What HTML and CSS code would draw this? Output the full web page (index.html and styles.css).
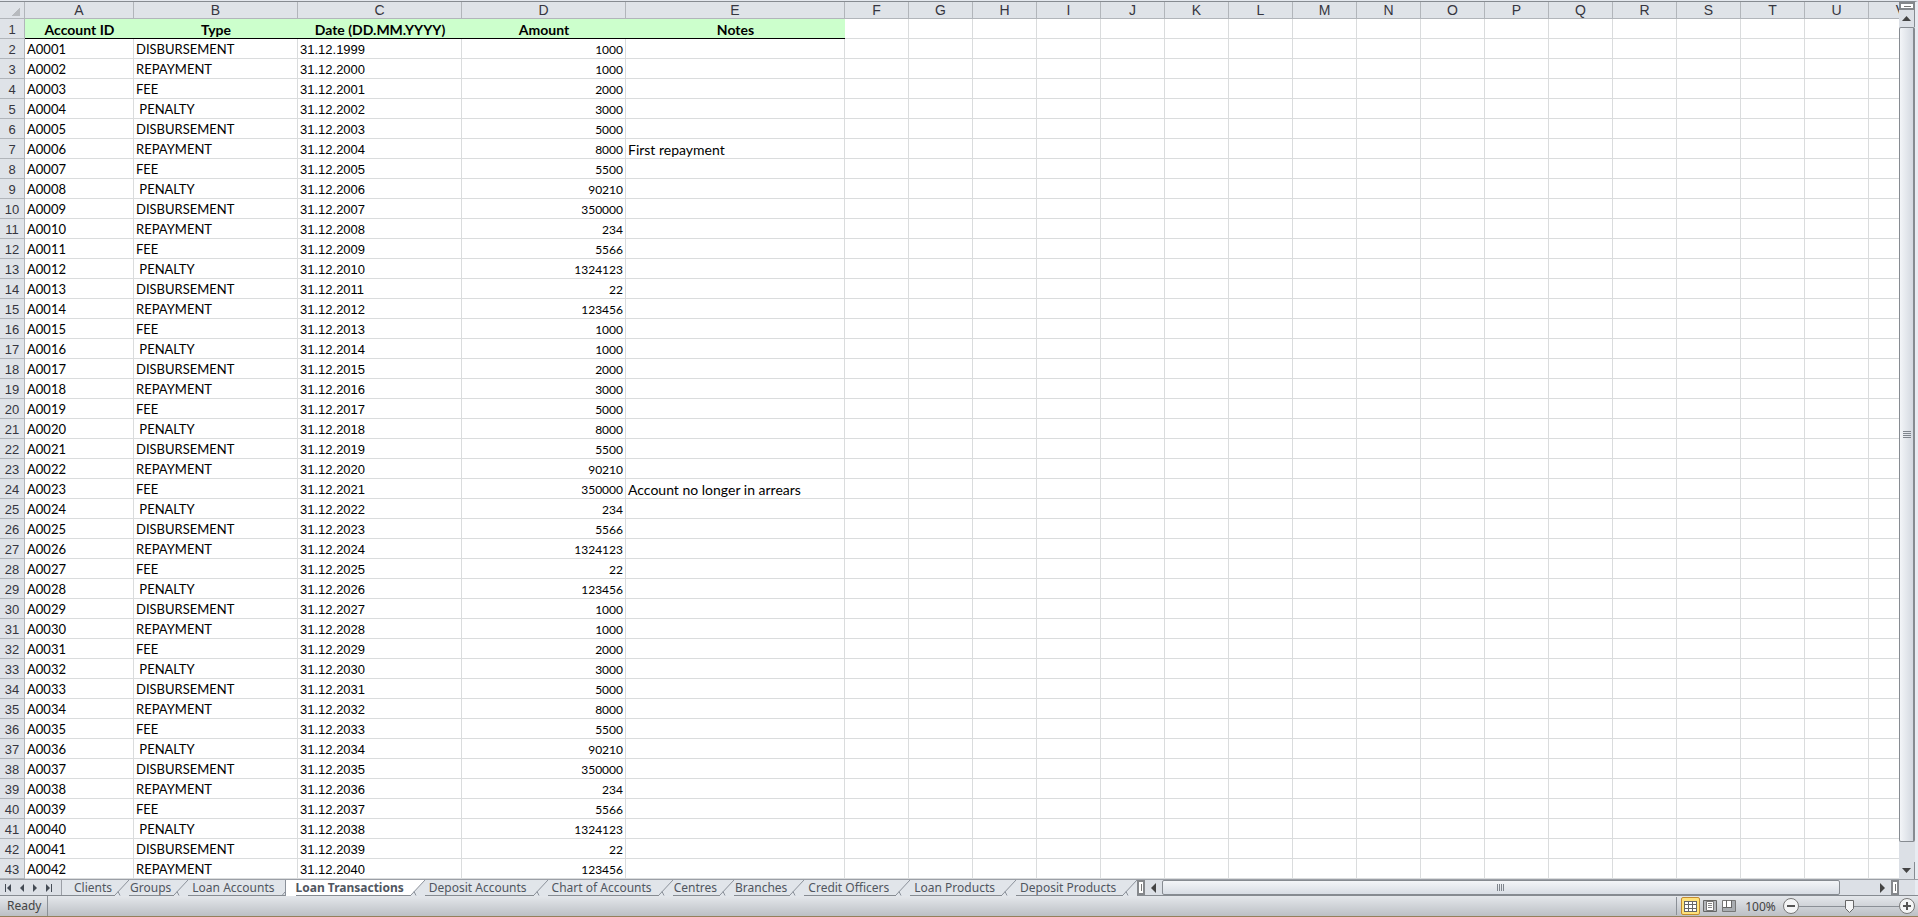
FILE: index.html
```
<!DOCTYPE html>
<html lang="en">
<head>
    <meta charset="UTF-8">
    <title>Loan Transactions</title>
    <link rel="stylesheet" href="styles.css">
</head>
<body>

    <div id="workbook">
        <div id="sheet">
            <div id="cells">
                <table id="grid">
                    <colgroup id="cols"></colgroup>
                    <thead id="letters"></thead>
                    <tbody id="rows"></tbody>
                </table>
            </div>
            <div id="vscroll">
                <button class="split-v" aria-label="Split horizontally"></button>
                <button class="arrow" aria-label="Scroll up"><svg width="9" height="5"><path d="M0 5L4.500 0L9 5z" fill="#444"/></svg></button>
                <div class="thumb-v"><span class="grip"></span></div>
                <button class="arrow" aria-label="Scroll down"><svg width="9" height="5"><path d="M0 0L4.500 5L9 0z" fill="#444"/></svg></button>
            </div>
        </div>

        <div id="tabbar">
            <div id="tabnav">
                <button aria-label="First sheet"><svg width="8" height="8"><path d="M1 0h1v8H1zM7 0v8L3 4z" fill="#444b55"/></svg></button>
                <button aria-label="Previous sheet"><svg width="8" height="8"><path d="M6 0v8L2 4z" fill="#444b55"/></svg></button>
                <button aria-label="Next sheet"><svg width="8" height="8"><path d="M1 0v8L5 4z" fill="#444b55"/></svg></button>
                <button aria-label="Last sheet"><svg width="8" height="8"><path d="M5 0h1v8H5zM0 0v8L4 4z" fill="#444b55"/></svg></button>
            </div>
            <div id="tabs"></div>
            <button class="split-h" aria-label="Resize tab bar"></button>
            <div id="hscroll">
                <button class="arrow-h" aria-label="Scroll left"><svg width="5" height="10"><path d="M5 0v10L0 5z" fill="#444"/></svg></button>
                <div class="track-h"><div class="thumb-h"><span class="grip"></span></div></div>
                <button class="arrow-h" aria-label="Scroll right"><svg width="5" height="10"><path d="M0 0v10L5 5z" fill="#444"/></svg></button>
            </div>
            <button class="split-h" aria-label="Split vertically"></button>
            <div class="corner"></div>
        </div>

        <div id="status">
            <span class="ready">Ready</span>
            <div class="views">
                <button class="view on" aria-label="Normal"><svg width="13" height="11"><path d="M0 0h13v11H0z" fill="#666"/><path d="M1 1h3v2H1zM5 1h3v2H5zM9 1h3v2H9zM1 4h3v3H1zM5 4h3v3H5zM9 4h3v3H9zM1 8h3v2H1zM5 8h3v2H5zM9 8h3v2H9z" fill="#fff"/></svg></button>
                <button class="view" aria-label="Page layout"><svg width="14" height="12"><path d="M0.500 0.500h13v11H0.500z" fill="#b4b7bb" stroke="#666"/><path d="M3.500 1.500h7v9h-7z" fill="#fff" stroke="#777"/><path d="M5 3.500h4M5 5.500h4M5 7.500h4" stroke="#888"/></svg></button>
                <button class="view" aria-label="Page break preview"><svg width="14" height="12"><path d="M0.500 0.500h13v11H0.500z" fill="#a9adb1" stroke="#777"/><path d="M1 1h3v6H1zM5 1h4v6H5z" fill="#fff"/><path d="M4.500 0v7M9.500 0v7M1 7.500h9" stroke="#666"/></svg></button>
            </div>
            <button class="percent">100%</button>
            <div class="zoom">
                <button class="round" aria-label="Zoom out"><svg width="16" height="16"><circle cx="8" cy="8" r="7.500" fill="#f4f5f6" stroke="#777"/><path d="M4 8h8" stroke="#555" stroke-width="2"/></svg></button>
                <input type="range" min="0" max="100" value="50" aria-label="Zoom">
                <button class="round" aria-label="Zoom in"><svg width="16" height="16"><circle cx="8" cy="8" r="7.500" fill="#f4f5f6" stroke="#777"/><path d="M4 8h8M8 4v8" stroke="#555" stroke-width="2"/></svg></button>
            </div>
        </div>
    </div>

    <script>
        var letters = 'ABCDEFGHIJKLMNOPQRSTUV'.split('');
        var titles = ['Account ID', 'Type', 'Date (DD.MM.YYYY)', 'Amount', 'Notes'];
        var types = ['DISBURSEMENT', 'REPAYMENT', 'FEE', ' PENALTY'];
        var amounts = [1000, 1000, 2000, 3000, 5000, 8000, 5500, 90210, 350000, 234, 5566, 1324123, 22, 123456];
        var notes = {6: 'First repayment', 23: 'Account no longer in arrears'};
        var classes = ['id', 'type', 'date', 'amount', 'notes'];
        var sheets = ['Clients', 'Groups', 'Loan Accounts', 'Loan Transactions', 'Deposit Accounts', 'Chart of Accounts',
            'Centres', 'Branches', 'Credit Officers', 'Loan Products', 'Deposit Products'];
        var current = 3;

        // column widths and letters
        var cols = '<col class="c-num">';
        var head = '<tr><th class="all"></th>';
        for (var i = 0; i < letters.length; i++) {
            cols += '<col class="c-' + (classes[i] || 'blank') + '">';
            head += '<th scope="col">' + letters[i] + '</th>';
        }
        document.getElementById('cols').innerHTML = cols;
        document.getElementById('letters').innerHTML = head + '</tr>';

        // rows
        var html = '';
        for (var r = 1; r <= 43; r++) {
            var n = r - 1;
            var data = titles;
            if (n > 0) {
                data = ['A' + ('000' + n).slice(-4), types[(n - 1) % 4], '31.12.' + (1998 + n), amounts[(n - 1) % 14], notes[n] || ''];
            }
            html += '<tr' + (n ? '' : ' class="titles"') + '><th scope="row">' + r + '</th>';
            for (var c = 0; c < letters.length; c++) {
                html += c < 5 ? '<td class="' + classes[c] + '">' + data[c] + '</td>' : '<td></td>';
            }
            html += '</tr>';
        }
        document.getElementById('rows').innerHTML = html;

        // sheet tabs, the current one lies over the edge of the tab before it
        var slash = '<svg width="14" height="16"><path d="M14 0L0 15v1h14z" fill="#e1e5ea"/><path d="M14 0L0 15M3 11.500l2 4" fill="none" stroke="#8b919a"/></svg>';
        var edge = '<svg width="14" height="16"><path d="M3 0h11v16H3z" fill="#fff"/><path d="M3.500 0v16M3 12l-3 3.500" fill="none" stroke="#8b919a"/></svg>';
        var tabs = '';
        for (var t = 0; t < sheets.length; t++) {
            var cls = 'tab';
            if (sheets[t].length > 8) cls += ' long';
            if (t == current) cls += ' selected';
            tabs += '<button class="' + cls + '"><span>' + sheets[t] + '</span>' + (t == current - 1 ? edge : slash) + '</button>';
        }
        document.getElementById('tabs').innerHTML = tabs;
    </script>
</body>
</html>
```
FILE: styles.css
```
*{
    box-sizing: border-box;
    padding: 0;
    margin: 0;
}
body{
    font-family: "Noto Sans", sans-serif;
    font-size: 12px;
    background: #fff;
}
button{
    border: 0;
    background: none;
    font: inherit;
    color: inherit;
}
svg{
    display: block;
}
#workbook{
    display: flex;
    flex-direction: column;
    height: 100vh;
    border-bottom: 1px solid #94805a;
}

/* grid */
#sheet{
    display: flex;
    flex: 1;
    min-height: 0;
    border-top: 1px solid #e4e8ee;
}
#cells{
    flex: 1;
    min-width: 0;
    overflow: hidden;
    border-top: 1px solid #868b91;
}
#grid{
    table-layout: fixed;
    width: 0;
    border-collapse: separate;
    border-spacing: 0;
}
.c-num{ width: 25px; }
.c-id{ width: 109px; }
.c-type, .c-date, .c-amount{ width: 164px; }
.c-notes{ width: 219px; }
.c-blank{ width: 64px; }
#grid th{
    background: #dfe3e8;
    border-right: 1px solid #b1b5ba;
    border-bottom: 1px solid #b1b5ba;
    font-family: "Liberation Sans", sans-serif;
    font-size: 14px;
    font-weight: normal;
    line-height: 16px;
    color: #363640;
}
#grid tbody th{
    padding-top: 2px;
    font-size: 13px;
    line-height: 17px;
}
#grid thead .all{
    background: linear-gradient(135deg, transparent 50%, #b7babe 50%) right 4px bottom 2px / 8px 8px no-repeat #dfe3e8;
}
#grid td{
    height: 20px;
    padding: 2px 2px 0;
    border-right: 1px solid #dadcdd;
    border-bottom: 1px solid #dadcdd;
    font-family: Lato, sans-serif;
    font-size: 13px;
    line-height: 17px;
    white-space: pre;
    color: #000;
}
#grid .date{
    font-family: "Liberation Sans", sans-serif;
}
#grid .amount{
    font-size: 12px;
    text-align: right;
}
#grid .notes{
    font-size: 14px;
}
#grid .titles .id, #grid .titles .type, #grid .titles .date, #grid .titles .amount, #grid .titles .notes{
    background: #ccffcc;
    border-right: 0;
    border-bottom-color: #000;
    font-family: Lato, sans-serif;
    font-size: 14px;
    font-weight: bold;
    text-align: center;
}

/* scrollbars */
#vscroll{
    display: flex;
    flex-direction: column;
    width: 19px;
    background: #dce0e6;
    border-top: 1px solid #868b91;
    border-right: 3px solid #e8ecf2;
}
.split-v{
    height: 8px;
    border: 2px solid #85888c;
    background: linear-gradient(#777, #777) center / 7px 1px no-repeat #fff;
}
.arrow{
    display: flex;
    align-items: center;
    justify-content: center;
    height: 17px;
    border-right: 1px solid #868b91;
}
.thumb-v{
    display: flex;
    align-items: center;
    justify-content: center;
    flex: 1;
    margin-bottom: 20px;
    border: 1px solid #868b91;
    border-right-width: 2px;
    border-radius: 2px;
    background: linear-gradient(90deg, #f3f5f8, #d3d8e0);
}
.grip{
    width: 8px;
    height: 7px;
    background: repeating-linear-gradient(#7f858d 0 1px, transparent 1px 2px);
}
#tabbar{
    display: flex;
    height: 17px;
    border-top: 1px solid #9b9fa6;
    border-bottom: 1px solid #868b91;
    background: #dce0e6;
}
#tabnav{
    display: flex;
    align-items: center;
    gap: 6px;
    width: 62px;
    padding-left: 4px;
    border-right: 1px solid #9b9fa6;
}
#tabs{
    display: flex;
    background: #e1e5ea;
    color: #505660;
}
.tab{
    display: flex;
    line-height: 16px;
    white-space: nowrap;
}
.tab span{
    padding: 0 3px 0 1px;
}
.tab.long span{
    padding: 0 7px 0 4px;
}
.tab:first-child span{
    padding-left: 12px;
}
.tab.selected{
    background: #fff;
    font-weight: bold;
}
.tab.selected span{
    padding-left: 0;
}
.split-h{
    width: 8px;
    border: 2px solid #85888c;
    background: linear-gradient(#777, #777) center / 1px 7px no-repeat #fff;
}
#hscroll{
    display: flex;
    flex: 1;
}
.arrow-h{
    display: flex;
    align-items: center;
    justify-content: center;
    width: 17px;
}
.track-h{
    flex: 1;
    padding-right: 34px;
}
.thumb-h{
    display: flex;
    align-items: center;
    justify-content: center;
    height: 15px;
    border: 1px solid #868b91;
    border-radius: 2px;
    background: linear-gradient(#f3f5f8, #d8dde4);
}
.thumb-h .grip{
    background: repeating-linear-gradient(90deg, #7f858d 0 1px, transparent 1px 2px);
}
.corner{
    width: 19px;
    border-right: 3px solid #e8ecf2;
}

/* status bar */
#status{
    display: flex;
    align-items: center;
    height: 20px;
    background: linear-gradient(#e4e7eb, #bcc0c5);
    color: #444;
}
.ready{
    width: 48px;
    padding-left: 7px;
    line-height: 20px;
    border-right: 1px solid #8b9096;
}
.views{
    display: flex;
    margin-left: auto;
    padding-left: 4px;
    border-left: 1px solid #8b9096;
}
.view{
    display: flex;
    align-items: center;
    justify-content: center;
    width: 19px;
    height: 18px;
}
.view.on{
    border: 1px solid #c28a30;
    border-radius: 2px;
    background: #ffe27a;
}
.percent{
    width: 45px;
}
.zoom{
    display: flex;
    align-items: center;
    padding-right: 3px;
}
.zoom input{
    appearance: none;
    width: 100px;
    height: 16px;
    background: linear-gradient(#8b9096, #8b9096) center / 100% 1px no-repeat;
}
.zoom input::-webkit-slider-thumb{
    appearance: none;
    width: 9px;
    height: 13px;
    background: url("data:image/svg+xml,%3Csvg xmlns='http://www.w3.org/2000/svg' width='9' height='13'%3E%3Cpath d='M.5 .5h8v8l-4 4l-4-4z' fill='%23f4f5f6' stroke='%23666'/%3E%3C/svg%3E");
}
```
